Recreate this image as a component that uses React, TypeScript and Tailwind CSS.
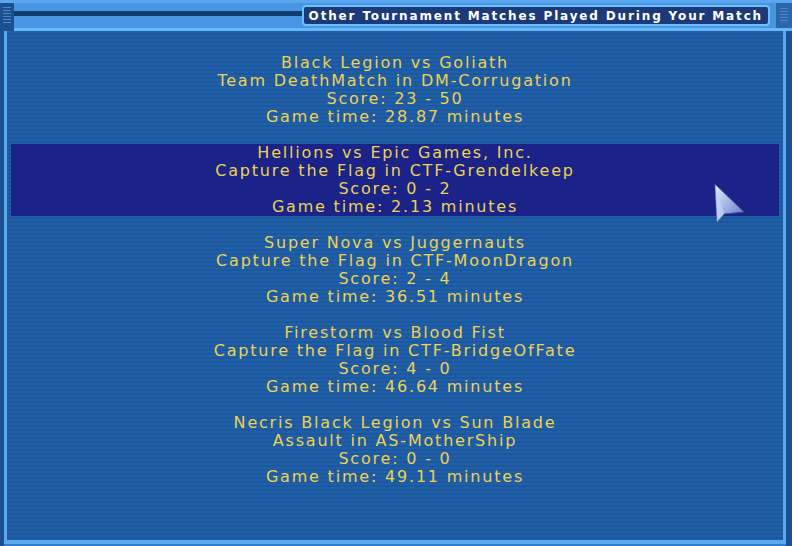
import React from 'react'

type Match = { teams: string; mode: string; score: string; time: string }

const matches: Match[] = [
  { teams: 'Black Legion vs Goliath', mode: 'Team DeathMatch in DM-Corrugation', score: '23 - 50', time: '28.87' },
  { teams: 'Hellions vs Epic Games, Inc.', mode: 'Capture the Flag in CTF-Grendelkeep', score: '0 - 2', time: '2.13' },
  { teams: 'Super Nova vs Juggernauts', mode: 'Capture the Flag in CTF-MoonDragon', score: '2 - 4', time: '36.51' },
  { teams: 'Firestorm vs Blood Fist', mode: 'Capture the Flag in CTF-BridgeOfFate', score: '4 - 0', time: '46.64' },
  { teams: 'Necris Black Legion vs Sun Blade', mode: 'Assault in AS-MotherShip', score: '0 - 0', time: '49.11' },
]

function Cursor() {
  return (
    <svg width="34" height="42" viewBox="0 0 34 42" className="absolute left-[712px] top-[182px]">
      <defs>
        <linearGradient id="cg" x1="0" y1="0" x2="1" y2="1">
          <stop offset="0" stopColor="#e4ecff" />
          <stop offset="0.5" stopColor="#9fb2e6" />
          <stop offset="1" stopColor="#5a6fb4" />
        </linearGradient>
      </defs>
      <path d="M3 2 L32 30 L12 32 L5 40 Z" fill="url(#cg)" stroke="#3d4f94" strokeWidth="1" />
      <path d="M3 2 L12 32 L5 40 Z" fill="#c8d4fa" opacity="0.7" />
    </svg>
  )
}

export default function App() {
  return (
    <div
      className="relative w-[792px] h-[546px] overflow-hidden flex flex-col bg-[#174a86]"
      style={{ fontFamily: '"DejaVu Sans", Verdana, sans-serif' }}
    >
      {/* header bar */}
      <div className="h-[31px] flex bg-[#4895e4] border-t-[3px] border-[#5aa6f0]">
        <div className="w-[14px] bg-[#1b4f8e] flex flex-col gap-[2px] px-[3px] pt-[4px]">
          {Array.from({ length: 6 }).map((_, i) => (
            <div key={i} className="h-[1px] bg-[#4d86c8]" />
          ))}
        </div>
        <div className="flex-1 flex flex-col">
          <div className="h-[8px]" />
          <div className="h-[5px] bg-[#0f3d72]" />
          <div className="flex-1" />
          <div className="h-[3px] bg-[#66b8fb]" />
        </div>
        <div className="flex flex-col">
          <div className="h-[2px]" />
          <div className="h-[21px] px-[5px] flex items-center rounded-[4px] border-2 border-[#6cc0ff] bg-[#1d3a78] text-white font-bold text-[12px] tracking-[1.85px]">
            Other Tournament Matches Played During Your Match
          </div>
          <div className="flex-1" />
          <div className="h-[3px] bg-[#66b8fb]" />
        </div>
        <div className="w-[22px] flex flex-col">
          <div className="flex-1 ml-[6px] bg-[#2a66aa] flex flex-col gap-[2px] px-[4px] pt-[5px]">
            {Array.from({ length: 5 }).map((_, i) => (
              <div key={i} className="h-[1px] bg-[#4d86c8]" />
            ))}
          </div>
          <div className="h-[3px] bg-[#66b8fb]" />
        </div>
      </div>

      {/* body */}
      <div className="flex-1 flex">
        <div className="w-[4px] bg-[#1b4f8e]" />
        <div className="w-[3px] bg-[#5aa8ee]" />
        <div className="flex-1 flex flex-col gap-[18px] pt-[23px] bg-[#1f5ea6] bg-[repeating-linear-gradient(180deg,#215fa7_0px,#215fa7_2px,#1c58a0_2px,#1c58a0_4px)]">
          {matches.map((m, i) => (
            <div
              key={i}
              className={`mx-[4px] flex flex-col items-center text-[16px] leading-[18px] tracking-[1.8px] text-[#ecd255] ${i === 1 ? 'bg-[#1b2388]' : ''}`}
            >
              <div>{m.teams}</div>
              <div>{m.mode}</div>
              <div>Score: {m.score}</div>
              <div>Game time: {m.time} minutes</div>
            </div>
          ))}
        </div>
        <div className="w-[3px] bg-[#5aa8ee]" />
        <div className="w-[6px] bg-[#1b4f8e]" />
      </div>

      {/* bottom edge */}
      <div className="h-[6px] flex">
        <div className="w-[4px] bg-[#1b4f8e]" />
        <div className="flex-1 bg-[#5aaaf2] border-b-[2px] border-[#2f7cc8]" />
        <div className="w-[6px] bg-[#1b4f8e]" />
      </div>

      <Cursor />
    </div>
  )
}
